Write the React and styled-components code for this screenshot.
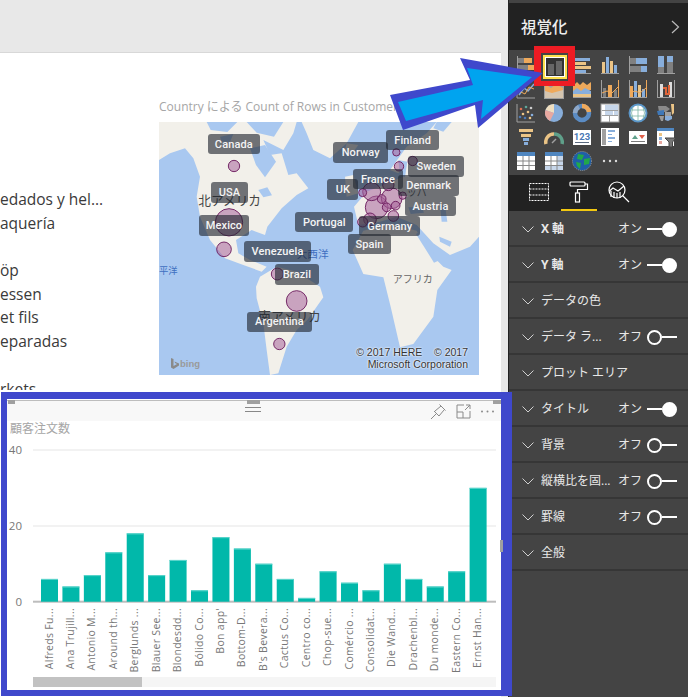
import React from 'react';
import styled, { createGlobalStyle } from 'styled-components';

const Global = createGlobalStyle`
  html, body { margin: 0; padding: 0; background: #e8e8e8; }
  * { box-sizing: border-box; }
  #root { width: 688px; height: 697px; overflow: hidden; }
`;
const App_ = styled.div`
  display: flex; width: 688px; height: 697px; position: relative; overflow: hidden;
  font-family: "Open Sans", "Noto Sans CJK JP", sans-serif;
`;
const Canvas = styled.main`
  width: 508px; height: 697px; background: #e8e8e8; padding-top: 52px; flex: none;
`;
const Page = styled.div`
  width: 501px; height: 645px; background: #fff; border-top: 1px solid #d8d8d8;
`;
const TopRow = styled.div`display: flex; height: 339px; overflow: hidden;`;
const CustomerList = styled.ul`
  list-style: none; margin: 0; padding: 135px 0 0; width: 159px; height: 337px; overflow: hidden; flex: none;
  font-size: 15.5px; color: #3a3a3a;
`;
const CustomerRow = styled.li`height: 23.7px; line-height: 23.7px; white-space: nowrap;`;
const MapColumn = styled.section`width: 320px; flex: none; padding-top: 46px;`;
const MapTitle = styled.div`
  font-size: 12px; line-height: 16px; color: #a6a6a6; white-space: nowrap; height: 23px;
`;
const MapBox = styled.div`position: relative; width: 320px; height: 253px; background: #a9c8f0; overflow: hidden;`;
const CountryTag = styled.div`
  position: absolute; display: flex; align-items: center; justify-content: center;
  border-radius: 3px; background: rgba(30, 35, 45, .62); color: #f4f4f4;
  font: 500 11px "Roboto", sans-serif; letter-spacing: .1px;
`;
const Copyright = styled.div`
  position: absolute; right: 11px; bottom: 5px; text-align: right; color: #333;
  font: 10.5px/12px "Liberation Sans", sans-serif; white-space: pre;
  text-shadow: 0 0 2px #fff, 0 0 2px #fff;
`;
const Bing = styled.div`
  position: absolute; left: 12px; bottom: 6px; display: flex; align-items: center; gap: 1px;
  color: #9a9a9a; font: 700 9.5px "Liberation Sans", sans-serif;
`;
const Frame = styled.section`
  position: relative; z-index: 2; margin-left: 1px; width: 511px; height: 304px;
  border: solid #3f48cc; border-width: 7px 11px 6px 6px; background: #fff;
`;
const VisualHeader = styled.div`
  height: 21px; margin-top: 1px; background: #f8f8f8; border-top: 1px solid #bdbdbd;
  display: flex; align-items: center; justify-content: flex-end; gap: 9px; padding-right: 6px;
`;
const Grip = styled.div`
  position: absolute; left: 238px; top: 8px; width: 16px; height: 5px;
  border-top: 1px solid #888; border-bottom: 1px solid #888;
`;
const Handle = styled.i`position: absolute; background: #a0a0a0; display: block;`;
const VisualTitle = styled.div`
  height: 17px; padding-left: 3px; font-size: 12px; line-height: 15px; color: #a6a6a6;
`;
const Scrollbar = styled.div`
  margin-left: 26px; width: 463px; height: 10px; background: #f5f5f5;
`;
const ScrollThumb = styled.div`width: 109px; height: 10px; background: #c2c2c2;`;
const Pane = styled.aside`
  width: 180px; height: 697px; flex: none; background: #444; border-left: 1px solid #222;
  margin-top: 0; display: flex; flex-direction: column; color: #eee;
`;
const PaneHeader = styled.header`
  height: 47px; margin-top: 3px; background: #222; display: flex; align-items: center;
  justify-content: space-between; padding: 0 8px 0 12px; font-size: 15.5px; font-weight: 500; color: #eee;
  flex: none;
`;
const Gallery = styled.div`
  height: 125px; flex: none; background: #444; padding: 3px 0 0 3px;
  display: grid; grid-template-columns: repeat(6, 28px); grid-auto-rows: 24px;
  justify-items: center; align-items: center;
`;
const Tabs = styled.nav`height: 36px; flex: none; background: #222; display: flex; padding-left: 12px; gap: 4px;`;
const Tab = styled.div`
  width: 36px; height: 36px; display: flex; align-items: center; justify-content: center;
  border-bottom: 2px solid ${p => (p.$active ? '#f2c811' : 'transparent')};
`;
const Row = styled.div`
  height: 36px; flex: none; background: #444; border-bottom: 2px solid #363636;
  display: flex; align-items: center; padding: 2px 11px 0 13px; font-size: 12px;
`;
const RowLabel = styled.span`
  margin-left: 7px; flex: 0 0 ${p => (p.$wide ? '120px' : '77px')}; color: #e8e8e8; white-space: nowrap; overflow: hidden;
  font-weight: ${p => (p.$bold ? 700 : 400)};
  position: relative; top: -1px;
`;
const RowState = styled.span`width: 29px; color: #e8e8e8; position: relative; top: -1px;`;
const Toggle = styled.div`display: flex; align-items: center; width: 30px; height: 15px;`;
const ToggleLine = styled.div`flex: 1; height: 2px; background: #fff;`;
const Knob = styled.div`
  width: 15px; height: 15px; border-radius: 50%; flex: none;
  border: 2px solid #fff; background: ${p => (p.$on ? '#fff' : 'transparent')};
`;
const Annotation = styled.svg`position: absolute; left: 0; top: 0; z-index: 5; pointer-events: none;`;
const RedBox = styled.div`
  position: absolute; z-index: 4; left: 534px; top: 46px; width: 41px; height: 40px;
  border: 7px solid #ed1c24; border-bottom-width: 5px; background: #444;
  display: flex; align-items: center; justify-content: center;
`;
const Selected = styled.div`
  width: 24px; height: 24px; border: 2px solid #ffe14d; background: #333;
  box-shadow: inset 0 0 0 1px #fff; display: flex; align-items: center; justify-content: center;
`;

const O = '#eea95b', B = '#88aedb', T = '#ebc486', G = '#808080', A = '#a0a0a0', W = '#fff';
const Ic = ({ children, s = 20 }) => <svg width={s} height={s} viewBox="0 0 20 20">{children}</svg>;
const R = (x, y, w, h, f) => <rect key={`${x}-${y}-${w}-${h}`} x={x} y={y} width={w} height={h} fill={f} />;
const AxisL = () => <path d="M1 1V19H19" fill="none" stroke={A} strokeWidth="1" />;
const AxisB = () => <path d="M1 18.5H19" stroke={A} strokeWidth="1" />;

const icons = [
  <Ic>{[R(1, 1, 1, 18, A), R(2, 3, 6, 5, G), R(8, 3, 8, 5, O), R(2, 10, 10, 5, G), R(12, 10, 7, 5, O)]}</Ic>,
  <Ic />,
  <Ic>{[R(1, 1, 1, 18, A), R(2, 3, 16, 3, B), R(2, 7, 12, 3, T), R(2, 11, 17, 3, T), R(2, 15, 12, 3, B)]}<AxisB /></Ic>,
  <Ic><AxisB />{[R(2, 7, 3, 11, T), R(6, 2, 3, 16, B), R(10, 6, 3, 12, T), R(14, 10, 3, 8, B)]}</Ic>,
  <Ic>{[R(1, 1, 1, 18, A), R(2, 3, 6, 6, G), R(8, 3, 11, 6, B), R(2, 11, 11, 6, G), R(13, 11, 6, 6, B)]}</Ic>,
  <Ic><AxisB />{[R(2, 1, 6, 11, B), R(2, 12, 6, 6, G), R(11, 1, 6, 6, B), R(11, 7, 6, 11, G)]}</Ic>,
  <Ic><AxisL /><path d="M3 16L8 9L12 12L18 5" fill="none" stroke={B} strokeWidth="1.5" /><path d="M3 12L9 15L13 8L18 10" fill="none" stroke={O} strokeWidth="1" /></Ic>,
  <Ic><rect x="0" y="0" width="20" height="20" fill={A} /><path d="M1 5L7 9L12 5L19 9V19H1Z" fill={O} /><path d="M1 12L8 14L19 11V19H1Z" fill="#d4c5b0" /></Ic>,
  <Ic><path d="M1 7L5 3L8 6L11 3L15 6L19 3V11L1 13Z" fill={O} /><path d="M1 12L5 9L9 12L13 9L19 12V15L1 16Z" fill={B} /><path d="M1 15H19V18H1Z" fill={T} /><AxisB /></Ic>,
  <Ic><AxisB />{[R(3, 9, 3, 9, G), R(8, 6, 4, 12, O), R(14, 11, 3, 7, G), R(18, 1, 1, 17, O), R(1, 1, 1, 17, A)]}<path d="M2 14L7 12L12 14L18 8" fill="none" stroke={O} /></Ic>,
  <Ic><AxisB />{[R(2, 7, 3, 11, O), R(6, 2, 3, 16, B), R(10, 6, 3, 12, T), R(14, 10, 3, 8, B), R(18, 1, 1, 17, O), R(1, 1, 1, 17, A)]}<path d="M2 14L7 12L12 14L18 9" fill="none" stroke={O} /></Ic>,
  <Ic><AxisB />{[R(1, 1, 1, 17, A), R(18, 1, 1, 17, A), R(4, 5, 3, 13, '#ddd'), R(13, 3, 3, 15, '#ddd')]}<path d="M7 9H10V15H13V6" fill="none" stroke="#e0653a" strokeWidth="2" /></Ic>,
  <Ic><AxisL />{[[5, 6, '#e07050'], [10, 4, '#5fa89a'], [15, 5, '#ccc'], [7, 11, T], [12, 9, T], [16, 12, B], [4, 14, '#4a78b5'], [9, 15, '#4a78b5'], [14, 15, T]].map(([cx, cy, f]) => <circle key={`${cx}${cy}`} cx={cx} cy={cy} r="1.3" fill={f} />)}</Ic>,
  <Ic><circle cx="10" cy="10" r="9" fill={B} /><path d="M10 10V1A9 9 0 0 0 1.5 7Z" fill="#f0dfc0" /><path d="M10 10L1.5 7A9 9 0 0 0 6 18Z" fill="#e8a8a0" /></Ic>,
  <Ic><circle cx="10" cy="10" r="7" fill="none" stroke="#5b8cc4" strokeWidth="4.5" /><path d="M10 3A7 7 0 0 1 17 9" fill="none" stroke={O} strokeWidth="4.5" /><path d="M3 10A7 7 0 0 1 7 4" fill="none" stroke="#8fa8c8" strokeWidth="4.5" /></Ic>,
  <Ic><rect x="1" y="1" width="18" height="18" fill={W} stroke={A} />{[R(5, 2, 13, 5, '#c6d6ea'), R(5, 8, 8, 4, '#c6d6ea'), R(14, 8, 4, 4, '#c6d6ea'), R(2, 12, 16, 1, A), R(9, 13, 1, 6, A), R(2, 7, 16, 1, A)]}</Ic>,
  <Ic><circle cx="10" cy="10" r="8.5" fill="#fff" stroke="#5b96c8" strokeWidth="2" /><path d="M2 7H18M2 13H18M10 2V18M5 4Q2 10 5 16M15 4Q18 10 15 16" fill="none" stroke="#7fb5a5" strokeWidth=".8" /></Ic>,
  <Ic><path d="M2 3H10L14 6L10 9H3Z" fill="#8a8a8a" /><path d="M1 8L8 7V12H2Z" fill="#3f78b8" /><path d="M9 9H15V13H9Z" fill="#a0a0a0" /><path d="M3 13H8L7 18L5 18Z" fill="#9a9a9a" /><path d="M9 13H16V16L12 18L9 17Z" fill={B} /><path d="M15 1H18V10L16 12Z" fill={T} /></Ic>,
  <Ic>{[R(3, 2, 14, 3, T), R(5, 7, 10, 3, T), R(7, 11, 6, 3, B), R(8, 15, 4, 3, B)]}</Ic>,
  <Ic><path d="M2 17A8 8 0 0 1 10 7" fill="none" stroke={T} strokeWidth="3.5" /><path d="M10 7A8 8 0 0 1 18 17" fill="none" stroke="#5fa08a" strokeWidth="3.5" /><path d="M8 16L12 12" stroke={A} strokeWidth="1.5" /></Ic>,
  <Ic>{[R(1, 3, 18, 15, W), R(3, 15, 14, 1, '#5a6a80')]}<text x="10" y="13" textAnchor="middle" fontSize="9.5" fontWeight="700" fontFamily="Roboto, sans-serif" fill="#4a78b5">123</text></Ic>,
  <Ic>{[R(1, 1, 18, 18, W), R(2, 2, 4, 16, '#a0a0a0'), R(8, 3, 7, 2, B), R(8, 7, 4, 1, B), R(8, 10, 7, 2, B), R(8, 14, 4, 1, B)]}</Ic>,
  <Ic>{[R(1, 4, 18, 13, W), R(3, 14, 14, 1, '#7a7a7a')]}<path d="M4 12L7 8L10 12Z" fill="#5fa08a" /><path d="M11 8H17L14 12Z" fill="#e0604a" /></Ic>,
  <Ic>{[R(1, 1, 17, 18, W), R(1, 1, 17, 3, '#4f86c0'), R(3, 6, 3, 3, T), R(3, 10, 3, 3, B), R(3, 14, 3, 3, '#e8a8a0')]}<path d="M9 11H20L16.5 15V20H13V15Z" fill="#777" stroke="#444" /></Ic>,
  <Ic>{[R(1, 1, 18, 18, W), R(1, 1, 18, 4, '#4f86c0'), R(6.5, 5, 1, 14, '#888'), R(12.5, 5, 1, 14, '#888'), R(1, 9.5, 18, 1, '#888'), R(1, 14, 18, 1, '#888')]}</Ic>,
  <Ic>{[R(1, 1, 18, 18, W), R(1, 1, 18, 4, '#4f86c0'), R(13, 5, 6, 14, '#c6d6ea'), R(1, 14, 18, 5, '#c6d6ea'), R(6.5, 5, 1, 14, '#888'), R(12.5, 5, 1, 14, '#888'), R(1, 9.5, 18, 1, '#888'), R(1, 14, 18, 1, '#888')]}</Ic>,
  <Ic><circle cx="10" cy="10" r="9.5" fill="#1f5fa8" stroke="#999" strokeDasharray="1 1" /><path d="M6 3L12 4L10 9L5 8Z M12 8L18 7L17 13L12 14Z M4 11L9 12L8 18L5 15Z" fill="#22a84a" /></Ic>,
  <Ic><circle cx="4" cy="10" r="1.2" fill="#ddd" /><circle cx="10" cy="10" r="1.2" fill="#ddd" /><circle cx="16" cy="10" r="1.2" fill="#ddd" /></Ic>,
];

const FieldsIcon = () => (
  <svg width="22" height="22" viewBox="0 0 22 22" fill="none" stroke="#fff" strokeWidth="1" strokeDasharray="2 1">
    <path d="M1.5 2.5H20.5V19.5H1.5ZM1.5 8H20.5M1.5 14H20.5" />
  </svg>
);
const RollerIcon = () => (
  <svg width="20" height="22" viewBox="0 0 20 22" fill="none" stroke="#fff" strokeWidth="1.2">
    <rect x="1" y="1" width="15" height="4" rx="1" />
    <path d="M16 3H18.5V8.5H8.5V12" />
    <rect x="6.5" y="12" width="4" height="9" />
  </svg>
);
const AnalyticsIcon = () => (
  <svg width="22" height="22" viewBox="0 0 22 22" fill="none" stroke="#fff" strokeWidth="1.2">
    <circle cx="9" cy="9" r="8" />
    <path d="M14.5 14.5L21 21M3 16V10M6 17V11M9 17V12M12 17V11M1.5 10L5 7L10 10L16 5" />
  </svg>
);
const ChevronDown = () => (
  <svg width="12" height="7" viewBox="0 0 12 7" fill="none" stroke="#d0d0d0"><path d="M.5 .5L6 6L11.5 .5" /></svg>
);

const customers = ['edados y hel...', 'aquería', '', 'öp', 'essen', 'et fils', 'eparadas', '', 'rkets'];
const tags = [
  ['Canada', 173, 132, 330, 192], ['Finland', 709, 120, 867, 180], ['Norway', 550, 157, 714, 218],
  ['Sweden', 775, 199, 942, 260], ['France', 608, 238, 760, 298], ['Denmark', 745, 256, 927, 318],
  ['UK', 532, 268, 625, 329], ['USA', 183, 277, 294, 340], ['Austria', 764, 318, 919, 378],
  ['Mexico', 147, 376, 297, 438], ['Portugal', 436, 366, 610, 427], ['Germany', 628, 378, 811, 439],
  ['Spain', 594, 432, 723, 493], ['Venezuela', 281, 454, 484, 515], ['Brazil', 374, 523, 508, 584],
  ['Argentina', 292, 665, 485, 727],
];
const bubbles = [
  [252, 228, 17], [237, 397, 41], [222, 478, 22], [382, 552, 18], [440, 633, 31], [388, 762, 17],
  [739, 187, 11], [747, 229, 14], [788, 213, 14], [680, 352, 34], [725, 325, 31], [665, 305, 27],
  [715, 285, 17], [695, 327, 13], [710, 352, 13], [737, 347, 13], [758, 317, 11], [638, 308, 12],
  [660, 388, 19], [638, 396, 15], [730, 378, 16],
];
const MapDrawing = () => (
  <svg width="320" height="253" viewBox="27 96 960 759" style={{ display: 'block' }}>
    <g fill="#f2f0ea">
      <path d="M27 96V210L60 190L105 175L130 205L150 260L140 320L150 380L180 450L225 505L280 525L335 545L350 530L300 510L265 490L258 450L305 420L345 435L352 410L395 355L440 315L475 295L440 250L415 255L395 190L360 195L340 150L400 180L430 130L440 96Z" />
      <path d="M455 96H625L590 160L540 205L490 180L470 130Z" />
      <path d="M330 560L380 530L440 545L510 590L520 622L472 690L440 720L410 770L385 850L360 855L350 780L340 700L320 625L318 590Z" />
      <path d="M608 480L640 422L720 402L800 422L832 482L880 530L905 540L862 600L850 680L790 762L750 772L722 650L700 562L640 552Z" />
      <path d="M625 405L612 350L650 305L700 285L760 260L770 215L745 250L720 240L770 170L830 130L860 96H987V440L960 470L900 495L850 460L800 405L740 380L690 395Z" />
      <path d="M590 160L625 165L610 185L585 180Z" />
      <path d="M585 260L610 255L625 310L590 320Z" />
    </g>
    <g fill="#a9c8f0">
      <path d="M300 175L345 165L378 215L345 262L318 225Z" />
      <path d="M170 96H262L232 126L182 120Z" />
      <path d="M290 96H400L372 140L320 128Z" />
      <path d="M210 140L250 132L240 155L215 155Z" />
      <path d="M325 300L352 292L366 316L340 322Z" />
      <path d="M810 425L865 512L852 518L798 432Z" />
      <path d="M775 352L815 350L822 368L782 372Z" />
      <path d="M870 345L885 345L892 395L875 395Z" />
      <path d="M868 440L905 455L900 470L870 455Z" />
      <path d="M745 210L772 215L765 262L750 255Z" />
      <path d="M860 96H905L880 125L850 115Z" />
    </g>
    <g fontFamily="'Noto Sans CJK JP', sans-serif" fontSize="38" fill="#444">
      <text x="145" y="345">北アメリカ</text>
      <text x="325" y="692">南アメリカ</text>
      <text x="728" y="580" fontSize="30" fill="#666">アフリカ</text>
      <text x="770" y="318" fontSize="30" fill="#555">ッパ</text>
      <text x="440" y="503" fontSize="32" fill="#3f6fc0">大西洋</text>
      <text x="27" y="552" fontSize="28" fill="#3f6fc0">平洋</text>
    </g>
    {bubbles.map(([cx, cy, r]) => (
      <circle key={`${cx}-${cy}`} cx={cx} cy={cy} r={r} fill="#a8659b" fillOpacity=".55" stroke="#6a1a5c" strokeOpacity=".9" strokeWidth="3" />
    ))}
  </svg>
);

const data = [
  ['Alfreds Fu...', 6], ['Ana Trujill...', 4], ['Antonio M...', 7], ['Around th...', 13], ['Berglunds ...', 18],
  ['Blauer See...', 7], ['Blondesdd...', 11], ['Bólido Co...', 3], ["Bon app'", 17], ['Bottom-D...', 14],
  ["B's Bevera...", 10], ['Cactus Co...', 6], ['Centro co...', 1], ['Chop-sue...', 8], ['Comércio ...', 5],
  ['Consolidat...', 3], ['Die Wand...', 10], ['Drachenbl...', 6], ['Du monde...', 4], ['Eastern Co...', 8], ['Ernst Han...', 30],
];
const zero = 601.7, unit = 3.795;
const BarChart = () => (
  <svg width="493" height="239" viewBox="7 438 493 239" style={{ display: 'block' }}>
    {[[450, '40'], [526, '20'], [601.7, '0']].map(([y, t]) => (
      <g key={t}>
        <text x="22" y={y + 4} textAnchor="end" fontSize="11.5" fill="#777" fontFamily="'Open Sans', sans-serif">{t}</text>
        <rect x="33" y={y - 1} width="463" height="2" fill={t === '0' ? '#bdbdbd' : '#f2f2f2'} />
      </g>
    ))}
    {data.map(([name, v], i) => {
      const cx = 49.5 + i * 21.43;
      return (
        <g key={name}>
          <rect x={cx - 8.5} y={zero - v * unit} width="17" height={v * unit} fill="#01b8aa" />
          <rect x={cx - 8.5} y={zero - v * unit} width="17" height="1" fill="#5fd6cd" />
          <text transform={`translate(${cx + 3} 608) rotate(-90)`} textAnchor="end" fontSize="10.5" letterSpacing=".3" fill="#777" fontFamily="'Open Sans', sans-serif">{name}</text>
        </g>
      );
    })}
  </svg>
);

const rows = [
  ['X 軸', 'オン', true, true], ['Y 軸', 'オン', true, true], ['データの色'], ['データ ラ...', 'オフ', false],
  ['プロット エリア'], ['タイトル', 'オン', true], ['背景', 'オフ', false], ['縦横比を固...', 'オフ', false],
  ['罫線', 'オフ', false], ['全般'],
];

export default function App() {
  return (
    <App_>
      <Global />
      <Canvas>
        <Page>
          <TopRow>
            <CustomerList>
              {customers.map((c, i) => <CustomerRow key={i}>{c || '\u00a0'}</CustomerRow>)}
            </CustomerList>
            <MapColumn>
              <MapTitle>Country による Count of Rows in Customer</MapTitle>
              <MapBox>
                <MapDrawing />
                {tags.map(([t, x1, y1, x2, y2]) => (
                  <CountryTag key={t} style={{ left: (x1 - 27) / 3, top: (y1 - 96) / 3, width: (x2 - x1) / 3, height: (y2 - y1) / 3 }}>{t}</CountryTag>
                ))}
                <Bing>
                  <svg width="8" height="11" viewBox="0 0 8 11"><path d="M0 0L2.5 1V8L6 6L4 5L3.5 3.5L8 5.5V7.5L2.5 11L0 9.5Z" fill="#8a8a8a" /></svg>
                  bing
                </Bing>
                <Copyright>{'© 2017 HERE    © 2017\nMicrosoft Corporation'}</Copyright>
              </MapBox>
            </MapColumn>
          </TopRow>
          <Frame>
            <Handle style={{ left: 1, top: 1, width: 7, height: 4 }} />
            <Handle style={{ left: 240, top: 1, width: 13, height: 4 }} />
            <Handle style={{ right: 0, top: 1, width: 8, height: 4 }} />
            <Handle style={{ right: -2, top: 141, width: 3, height: 12 }} />
            <Grip />
            <VisualHeader>
              <svg width="17" height="17" viewBox="0 0 17 17" fill="none" stroke="#8a8a8a"><path d="M1 16L6 11M4 8L9 13M5 8L11 3M9 13L14 7M9.5 1.5L15.5 7.5" /></svg>
              <svg width="15" height="15" viewBox="0 0 15 15" fill="none" stroke="#8a8a8a"><path d="M8 1H1V14H14V7M1 8H7V14M9 6L14 1M10 1H14V5" /></svg>
              <svg width="15" height="15" viewBox="0 0 15 15" fill="#8a8a8a"><circle cx="2" cy="7.5" r="1" /><circle cx="7.5" cy="7.5" r="1" /><circle cx="13" cy="7.5" r="1" /></svg>
            </VisualHeader>
            <VisualTitle>顧客注文数</VisualTitle>
            <BarChart />
            <Scrollbar><ScrollThumb /></Scrollbar>
          </Frame>
        </Page>
      </Canvas>
      <Pane>
        <PaneHeader>
          視覚化
          <svg width="9" height="14" viewBox="0 0 9 14" fill="none" stroke="#bbb" strokeWidth="1.2"><path d="M1 1L7.5 7L1 13" /></svg>
        </PaneHeader>
        <Gallery>{icons.map((ic, i) => <React.Fragment key={i}>{ic}</React.Fragment>)}</Gallery>
        <Tabs>
          <Tab><FieldsIcon /></Tab>
          <Tab $active><RollerIcon /></Tab>
          <Tab><AnalyticsIcon /></Tab>
        </Tabs>
        {rows.map(([label, state, on, bold]) => (
          <Row key={label}>
            <ChevronDown />
            <RowLabel $bold={bold} $wide={!state}>{label}</RowLabel>
            {state && <RowState>{state}</RowState>}
            {state && (
              <Toggle>
                {on ? <><ToggleLine /><Knob $on /></> : <><Knob /><ToggleLine /></>}
              </Toggle>
            )}
          </Row>
        ))}
      </Pane>
      <RedBox>
        <Selected>
          <svg width="16" height="16" viewBox="0 0 16 16"><rect x="1" y="5" width="6" height="11" fill="#666" /><rect x="9" y="2" width="6" height="14" fill="#666" /></svg>
        </Selected>
      </RedBox>
      <Annotation width="688" height="697">
        <polygon points="390,95 470,80 460,58 543,73 478,128 475,105 403,130" fill="#3f48cc" />
        <polygon points="398,102 473,85 467,68 532,77 481,119 483,100 406,121" fill="#00a4ef" />
      </Annotation>
    </App_>
  );
}
